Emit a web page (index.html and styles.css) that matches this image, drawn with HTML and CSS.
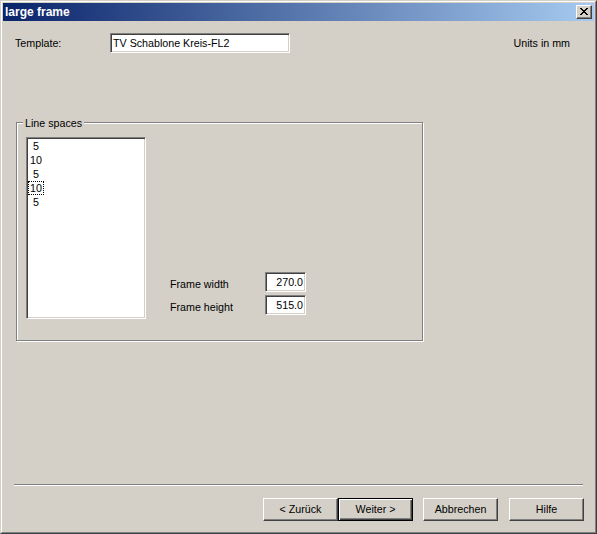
FILE: index.html
```html
<!DOCTYPE html>
<html>
<head>
<meta charset="utf-8">
<title>large frame</title>
<link rel="stylesheet" href="styles.css">
</head>
<body>
<div class="window">
  <div class="frame">
    <div class="titlebar">
      <span class="title">large frame</span>
      <div class="close">
        <svg width="8" height="7" viewBox="0 0 8 7" shape-rendering="crispEdges">
          <g fill="#000">
            <rect x="0" y="0" width="2" height="1"/><rect x="6" y="0" width="2" height="1"/>
            <rect x="1" y="1" width="2" height="1"/><rect x="5" y="1" width="2" height="1"/>
            <rect x="2" y="2" width="4" height="1"/>
            <rect x="3" y="3" width="2" height="1"/>
            <rect x="2" y="4" width="4" height="1"/>
            <rect x="1" y="5" width="2" height="1"/><rect x="5" y="5" width="2" height="1"/>
            <rect x="0" y="6" width="2" height="1"/><rect x="6" y="6" width="2" height="1"/>
          </g>
        </svg>
      </div>
    </div>
    <div class="content">
      <div class="row-template">
        <span class="lbl-template">Template:</span>
        <div class="field field-template">TV Schablone Kreis-FL2</div>
        <span class="units">Units in mm</span>
      </div>
      <div class="group">
        <span class="legend">Line spaces</span>
        <div class="listbox">
          <div class="item"><span class="item-text"> 5</span></div>
          <div class="item"><span class="item-text">10</span></div>
          <div class="item"><span class="item-text"> 5</span></div>
          <div class="item"><span class="item-text focus">10</span></div>
          <div class="item"><span class="item-text"> 5</span></div>
        </div>
        <div class="dims">
          <div class="dim-row">
            <span class="dim-label">Frame width</span>
            <div class="field field-num">270.0</div>
          </div>
          <div class="dim-row">
            <span class="dim-label">Frame height</span>
            <div class="field field-num">515.0</div>
          </div>
        </div>
      </div>
      <div class="separator"></div>
      <div class="buttons">
        <div class="btn">&lt; Zurück</div>
        <div class="btn btn-default">Weiter &gt;</div>
        <div class="btn btn-cancel">Abbrechen</div>
        <div class="btn btn-help">Hilfe</div>
      </div>
    </div>
  </div>
</div>
</body>
</html>
```

FILE: styles.css
```css
* {
  box-sizing: border-box;
}

html, body {
  margin: 0;
  padding: 0;
  background: #d4d0c8;
}

body {
  font-family: "Liberation Sans", Arial, sans-serif;
  font-size: 10.7px;
  color: #000;
}

.window {
  width: 597px;
  height: 534px;
  border: 1px solid;
  border-color: #d4d0c8 #404040 #404040 #d4d0c8;
  background: #d4d0c8;
}

.frame {
  height: 100%;
  border: 1px solid;
  border-color: #ffffff #808080 #808080 #ffffff;
  padding: 1px;
  display: flex;
  flex-direction: column;
}

.titlebar {
  height: 18px;
  background: linear-gradient(to right, #0a246a, #a6caf0);
  display: flex;
  align-items: flex-start;
  justify-content: space-between;
}

.title {
  color: #fff;
  font-weight: bold;
  font-size: 12px;
  line-height: 18px;
  padding-left: 2px;
}

.close {
  width: 16px;
  height: 14px;
  margin-top: 2px;
  margin-right: 2px;
  background: #d4d0c8;
  border: 1px solid;
  border-color: #ffffff #404040 #404040 #ffffff;
  box-shadow: inset -1px -1px 0 #808080;
  display: flex;
  align-items: flex-start;
  justify-content: flex-start;
  padding: 2px 0 0 3px;
}

.close svg {
  display: block;
}

.content {
  flex: 1;
  display: flex;
  flex-direction: column;
}

.row-template {
  margin-top: 12px;
  display: flex;
  align-items: center;
  height: 20px;
}

.lbl-template {
  margin-left: 12px;
  width: 95px;
}

.field {
  background: #fff;
  border: 1px solid;
  border-color: #808080 #ffffff #ffffff #808080;
  box-shadow: inset 1px 1px 0 #404040, inset -1px -1px 0 #d4d0c8;
  height: 20px;
  line-height: 18px;
  white-space: nowrap;
  overflow: hidden;
}

.field-template {
  width: 180px;
  padding-left: 2px;
}

.units {
  margin-left: auto;
  margin-right: 24px;
}

.group {
  position: relative;
  margin-top: 69px;
  margin-left: 13px;
  width: 407px;
  border: 1px solid #808080;
  box-shadow: inset 1px 1px 0 #ffffff, 1px 1px 0 #ffffff;
  padding: 14px 0 21px 9px;
  display: flex;
}

.legend {
  position: absolute;
  top: -6px;
  left: 6px;
  padding: 0 2px;
  line-height: 13px;
  background: #d4d0c8;
}

.listbox {
  width: 120px;
  height: 182px;
  background: #fff;
  border: 1px solid;
  border-color: #808080 #ffffff #ffffff #808080;
  box-shadow: inset 1px 1px 0 #404040, inset -1px -1px 0 #d4d0c8;
  padding: 1px 1px;
}

.item {
  height: 14px;
  padding: 1px 0;
}

.item-text {
  display: inline-block;
  height: 12px;
  line-height: 12px;
  margin-left: 1px;
  padding: 0 1px;
  white-space: pre;
}

.focus {
  outline: 1px dotted #000;
}

.dims {
  align-self: flex-end;
  margin-left: 24px;
  margin-bottom: 4px;
  display: flex;
  flex-direction: column;
  gap: 3px;
}

.dim-row {
  display: flex;
  align-items: center;
}

.dim-label {
  width: 95px;
  padding-top: 3px;
}

.field-num {
  width: 41px;
  text-align: right;
  padding-right: 2px;
}

.separator {
  margin-top: 143px;
  margin-left: 11px;
  width: 569px;
  height: 2px;
  border-top: 1px solid #808080;
  border-bottom: 1px solid #ffffff;
}

.buttons {
  margin-top: 12px;
  margin-left: 260px;
  display: flex;
}

.btn {
  width: 75px;
  height: 23px;
  line-height: 21px;
  text-align: center;
  background: #d4d0c8;
  border: 1px solid;
  border-color: #ffffff #404040 #404040 #ffffff;
  box-shadow: inset -1px -1px 0 #808080;
}

.btn-default {
  border: 1px solid #000;
  box-shadow: inset 1px 1px 0 #ffffff, inset -1px -1px 0 #404040, inset -2px -2px 0 #808080;
}

.btn-cancel {
  margin-left: 10px;
}

.btn-help {
  margin-left: 11px;
}
```
